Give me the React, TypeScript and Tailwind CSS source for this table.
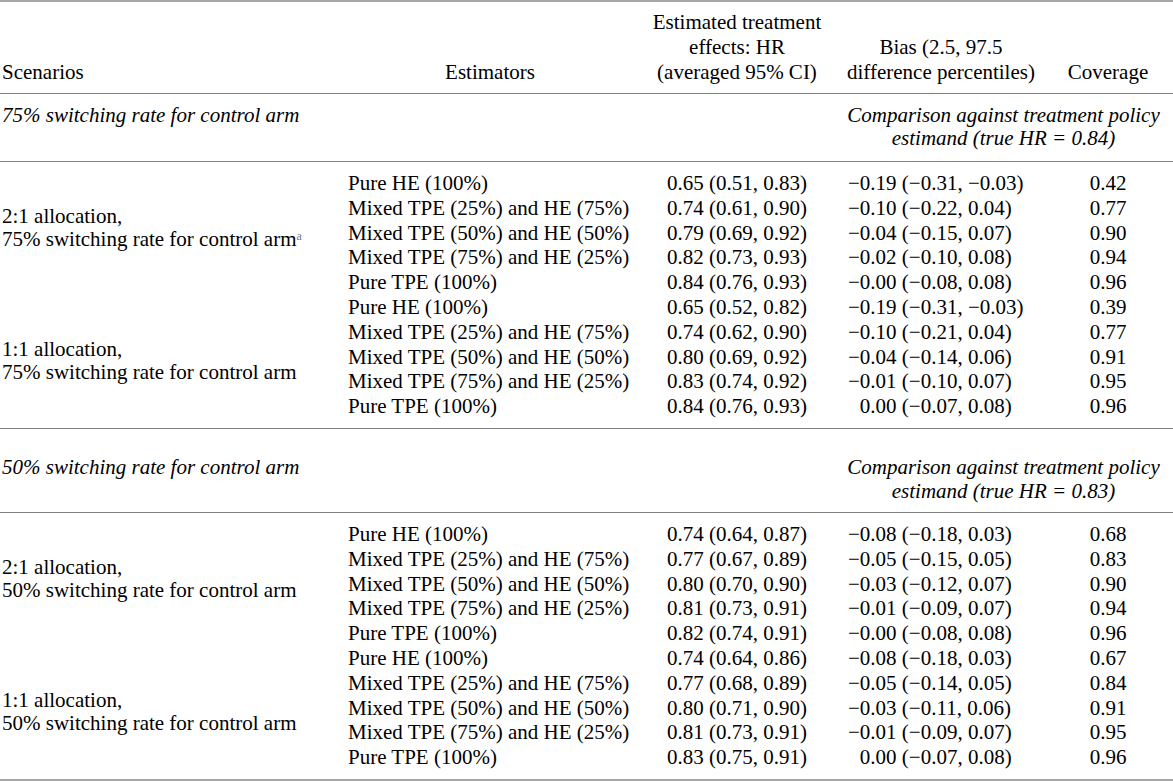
import React from "react";

type Row = { est: string; hr: string; bias: string; cov: string };

const estimators = [
  "Pure HE (100%)",
  "Mixed TPE (25%) and HE (75%)",
  "Mixed TPE (50%) and HE (50%)",
  "Mixed TPE (75%) and HE (25%)",
  "Pure TPE (100%)",
];

const mk = (vals: [string, string, string][]): Row[] =>
  vals.map((v, i) => ({ est: estimators[i], hr: v[0], bias: v[1], cov: v[2] }));

const sections = [
  {
    title: "75% switching rate for control arm",
    hr: "0.84",
    first: true,
    groups: [
      {
        label: "2:1 allocation,",
        label2: "75% switching rate for control arm",
        note: true,
        rows: mk([
          ["0.65 (0.51, 0.83)", "−0.19 (−0.31, −0.03)", "0.42"],
          ["0.74 (0.61, 0.90)", "−0.10 (−0.22, 0.04)", "0.77"],
          ["0.79 (0.69, 0.92)", "−0.04 (−0.15, 0.07)", "0.90"],
          ["0.82 (0.73, 0.93)", "−0.02 (−0.10, 0.08)", "0.94"],
          ["0.84 (0.76, 0.93)", "−0.00 (−0.08, 0.08)", "0.96"],
        ]),
      },
      {
        label: "1:1 allocation,",
        label2: "75% switching rate for control arm",
        note: false,
        rows: mk([
          ["0.65 (0.52, 0.82)", "−0.19 (−0.31, −0.03)", "0.39"],
          ["0.74 (0.62, 0.90)", "−0.10 (−0.21, 0.04)", "0.77"],
          ["0.80 (0.69, 0.92)", "−0.04 (−0.14, 0.06)", "0.91"],
          ["0.83 (0.74, 0.92)", "−0.01 (−0.10, 0.07)", "0.95"],
          ["0.84 (0.76, 0.93)", "0.00 (−0.07, 0.08)", "0.96"],
        ]),
      },
    ],
  },
  {
    title: "50% switching rate for control arm",
    hr: "0.83",
    first: false,
    groups: [
      {
        label: "2:1 allocation,",
        label2: "50% switching rate for control arm",
        note: false,
        rows: mk([
          ["0.74 (0.64, 0.87)", "−0.08 (−0.18, 0.03)", "0.68"],
          ["0.77 (0.67, 0.89)", "−0.05 (−0.15, 0.05)", "0.83"],
          ["0.80 (0.70, 0.90)", "−0.03 (−0.12, 0.07)", "0.90"],
          ["0.81 (0.73, 0.91)", "−0.01 (−0.09, 0.07)", "0.94"],
          ["0.82 (0.74, 0.91)", "−0.00 (−0.08, 0.08)", "0.96"],
        ]),
      },
      {
        label: "1:1 allocation,",
        label2: "50% switching rate for control arm",
        note: false,
        rows: mk([
          ["0.74 (0.64, 0.86)", "−0.08 (−0.18, 0.03)", "0.67"],
          ["0.77 (0.68, 0.89)", "−0.05 (−0.14, 0.05)", "0.84"],
          ["0.80 (0.71, 0.90)", "−0.03 (−0.11, 0.06)", "0.91"],
          ["0.81 (0.73, 0.91)", "−0.01 (−0.09, 0.07)", "0.95"],
          ["0.83 (0.75, 0.91)", "0.00 (−0.07, 0.08)", "0.96"],
        ]),
      },
    ],
  },
];

function Bias({ v }: { v: string }) {
  // keep the numbers lined up when there is no minus sign
  if (v.startsWith("−")) return <>{v}</>;
  return (
    <>
      <span className="invisible">−</span>
      {v}
    </>
  );
}

export default function App() {
  return (
    <div className="w-[1173px] h-[781px] bg-white text-black overflow-hidden font-['Liberation_Serif','Times_New_Roman',serif] text-[21px]">
      <table className="w-full table-fixed border-collapse border-t-2 border-b-2 border-[#a6a6a6]">
        <colgroup>
          <col className="w-[340px]" />
          <col className="w-[300px]" />
          <col className="w-[186px]" />
          <col className="w-[230px]" />
          <col className="w-[117px]" />
        </colgroup>
        <thead>
          <tr className="border-b border-[#808080] align-bottom leading-[25px]">
            <th className="font-normal text-left pl-[2px] pt-[8px] pb-[8px]">Scenarios</th>
            <th className="font-normal text-center pt-[8px] pb-[8px]">Estimators</th>
            <th className="font-normal text-center pt-[8px] pb-[8px] pl-[8px]">
              Estimated treatment
              <br />
              effects: HR
              <br />
              (averaged 95% CI)
            </th>
            <th className="font-normal text-center pt-[8px] pb-[8px]">
              Bias (2.5, 97.5
              <br />
              difference percentiles)
            </th>
            <th className="font-normal text-center pt-[8px] pb-[8px] pr-[13px]">Coverage</th>
          </tr>
        </thead>
        {sections.map((s) => (
          <tbody key={s.title}>
            <tr className="border-b border-[#808080] border-t leading-[23px] align-top">
              <td colSpan={3} className={`italic pl-[2px] ${s.first ? "pt-[10px] pb-[11px]" : "pt-[26px] pb-[9px] leading-[24px]"}`}>
                {s.title}
              </td>
              <td colSpan={2} className={`italic text-center pl-[8px] ${s.first ? "pt-[10px] pb-[11px]" : "pt-[26px] pb-[9px] leading-[24px]"}`}>
                Comparison against treatment policy
                <br />
                estimand (true HR = {s.hr})
              </td>
            </tr>
            {s.groups.map((g, gi) =>
              g.rows.map((r, ri) => {
                const top = gi === 0 && ri === 0;
                const bottom = gi === s.groups.length - 1 && ri === g.rows.length - 1;
                const pad = `${top ? "pt-[9px]" : ""} ${bottom ? "pb-[9px]" : ""}`;
                return (
                  <tr key={`${gi}-${ri}`} className="leading-[24.8px]">
                    {ri === 0 && (
                      <td rowSpan={g.rows.length} className="align-middle pl-[2px] leading-[23px]">
                        {g.label}
                        <br />
                        {g.label2}
                        {g.note && <span className="text-[12px] align-[6px] text-[#777] leading-none">a</span>}
                      </td>
                    )}
                    <td className={`pl-[8px] whitespace-nowrap ${pad}`}>{r.est}</td>
                    <td className={`text-center pl-[8px] whitespace-nowrap ${pad}`}>{r.hr}</td>
                    <td className={`pl-[22px] whitespace-nowrap ${pad}`}>
                      <Bias v={r.bias} />
                    </td>
                    <td className={`text-center pr-[13px] ${pad}`}>{r.cov}</td>
                  </tr>
                );
              })
            )}
          </tbody>
        ))}
      </table>
    </div>
  );
}
